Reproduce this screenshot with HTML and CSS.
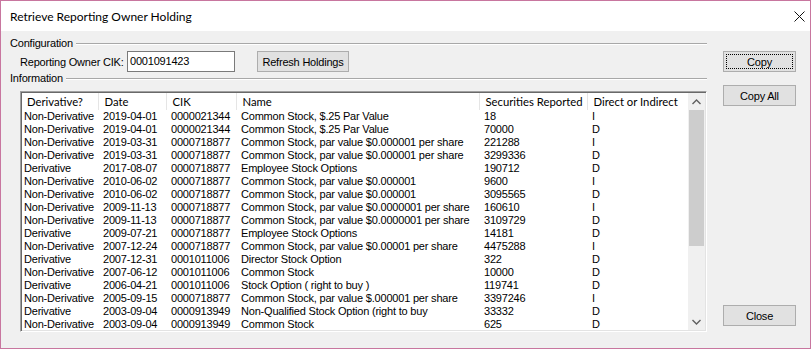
FILE: index.html
```html
<!DOCTYPE html>
<html>
    <head>
        <title>Retrieve Reporting Owner Holding</title>
        <meta charset="utf-8">
        <link rel="stylesheet" href="styles.css">
    </head>
    <body>
        <div class="rroh-window">
            <div class="rroh-titlebar">
                <span class="rroh-titlebar__text">Retrieve Reporting Owner Holding</span>
                <svg class="rroh-titlebar__close" width="11" height="11" viewBox="0 0 11 11">
                    <path d="M0.5 0.5 L10.5 10.5 M10.5 0.5 L0.5 10.5" stroke="#111" stroke-width="1" fill="none"/>
                </svg>
            </div>

            <div class="rroh-content">
                <div class="rroh-main">
                    <div class="rroh-group">
                        <span class="rroh-group__label">Configuration</span>
                        <span class="rroh-group__line"></span>
                    </div>
                    <div class="rroh-cik-row">
                        <label class="rroh-cik-row__label">Reporting Owner CIK:</label>
                        <div class="rroh-input">0001091423</div>
                        <button class="rroh-btn rroh-btn--refresh">Refresh Holdings</button>
                    </div>
                    <div class="rroh-group">
                        <span class="rroh-group__label">Information</span>
                        <span class="rroh-group__line"></span>
                    </div>

                    <div class="rroh-list">
                        <div class="rroh-list__view">
                            <table class="rroh-table">
                                <colgroup>
                                    <col style="width: 76px">
                                    <col style="width: 68px">
                                    <col style="width: 70px">
                                    <col style="width: 243px">
                                    <col style="width: 108px">
                                    <col style="width: 101px">
                                </colgroup>
                                <thead>
                                    <tr>
                                        <th>Derivative?</th>
                                        <th>Date</th>
                                        <th>CIK</th>
                                        <th>Name</th>
                                        <th>Securities Reported</th>
                                        <th class="rroh-table__last">Direct or Indirect</th>
                                    </tr>
                                </thead>
                                <tbody>
                                    <tr><td>Non-Derivative</td><td>2019-04-01</td><td>0000021344</td><td>Common Stock, $.25 Par Value</td><td>18</td><td>I</td></tr>
                                    <tr><td>Non-Derivative</td><td>2019-04-01</td><td>0000021344</td><td>Common Stock, $.25 Par Value</td><td>70000</td><td>D</td></tr>
                                    <tr><td>Non-Derivative</td><td>2019-03-31</td><td>0000718877</td><td>Common Stock, par value $0.000001 per share</td><td>221288</td><td>I</td></tr>
                                    <tr><td>Non-Derivative</td><td>2019-03-31</td><td>0000718877</td><td>Common Stock, par value $0.000001 per share</td><td>3299336</td><td>D</td></tr>
                                    <tr><td>Derivative</td><td>2017-08-07</td><td>0000718877</td><td>Employee Stock Options</td><td>190712</td><td>D</td></tr>
                                    <tr><td>Non-Derivative</td><td>2010-06-02</td><td>0000718877</td><td>Common Stock, par value $0.000001</td><td>9600</td><td>I</td></tr>
                                    <tr><td>Non-Derivative</td><td>2010-06-02</td><td>0000718877</td><td>Common Stock, par value $0.000001</td><td>3095565</td><td>D</td></tr>
                                    <tr><td>Non-Derivative</td><td>2009-11-13</td><td>0000718877</td><td>Common Stock, par value $0.0000001 per share</td><td>160610</td><td>I</td></tr>
                                    <tr><td>Non-Derivative</td><td>2009-11-13</td><td>0000718877</td><td>Common Stock, par value $0.0000001 per share</td><td>3109729</td><td>D</td></tr>
                                    <tr><td>Derivative</td><td>2009-07-21</td><td>0000718877</td><td>Employee Stock Options</td><td>14181</td><td>D</td></tr>
                                    <tr><td>Non-Derivative</td><td>2007-12-24</td><td>0000718877</td><td>Common Stock, par value $0.00001 per share</td><td>4475288</td><td>I</td></tr>
                                    <tr><td>Derivative</td><td>2007-12-31</td><td>0001011006</td><td>Director Stock Option</td><td>322</td><td>D</td></tr>
                                    <tr><td>Non-Derivative</td><td>2007-06-12</td><td>0001011006</td><td>Common Stock</td><td>10000</td><td>D</td></tr>
                                    <tr><td>Derivative</td><td>2006-04-21</td><td>0001011006</td><td>Stock Option ( right to buy )</td><td>119741</td><td>D</td></tr>
                                    <tr><td>Non-Derivative</td><td>2005-09-15</td><td>0000718877</td><td>Common Stock, par value $.000001 per share</td><td>3397246</td><td>I</td></tr>
                                    <tr><td>Derivative</td><td>2003-09-04</td><td>0000913949</td><td>Non-Qualified Stock Option (right to buy</td><td>33332</td><td>D</td></tr>
                                    <tr><td>Non-Derivative</td><td>2003-09-04</td><td>0000913949</td><td>Common Stock</td><td>625</td><td>D</td></tr>
                                </tbody>
                            </table>
                        </div>
                        <div class="rroh-scrollbar">
                            <div class="rroh-scrollbar__arrow">
                                <svg width="9" height="6" viewBox="0 0 9 6"><path d="M0.5 5 L4.5 1 L8.5 5" stroke="#606060" stroke-width="1.4" fill="none"/></svg>
                            </div>
                            <div class="rroh-scrollbar__track">
                                <div class="rroh-scrollbar__thumb"></div>
                            </div>
                            <div class="rroh-scrollbar__arrow">
                                <svg width="9" height="6" viewBox="0 0 9 6"><path d="M0.5 1 L4.5 5 L8.5 1" stroke="#606060" stroke-width="1.4" fill="none"/></svg>
                            </div>
                        </div>
                    </div>
                </div>

                <div class="rroh-side">
                    <button class="rroh-btn rroh-btn--side rroh-btn--focused"><span>Copy</span></button>
                    <button class="rroh-btn rroh-btn--side rroh-btn--copy-all">Copy All</button>
                    <button class="rroh-btn rroh-btn--side rroh-btn--close">Close</button>
                </div>
            </div>
        </div>
    </body>
</html>
```

FILE: styles.css
```css
* {
    box-sizing: border-box;
}

body {
    margin: 0;
    font-family: "Liberation Sans", Arial, sans-serif;
    font-size: 11px;
    letter-spacing: -0.2px;
    color: #000;
    background: #f0f0f0;
}

.rroh-window {
    width: 811px;
    height: 349px;
    border: 1px solid #c8769f;
    background: #f0f0f0;
    display: flex;
    flex-direction: column;
}

.rroh-titlebar {
    height: 30px;
    flex: none;
    background: #fff;
    display: flex;
    align-items: center;
    justify-content: space-between;
    padding: 0 4px 0 9px;
}

.rroh-titlebar__text {
    font-family: Lato, "Noto Sans", sans-serif;
    font-size: 12px;
    letter-spacing: 0;
}

.rroh-titlebar__close {
    margin-right: 1px;
}

.rroh-content {
    flex: 1;
    display: flex;
}

.rroh-main {
    width: 706px;
    padding: 6px 0 0 9px;
}

.rroh-group {
    display: flex;
    align-items: center;
    height: 13px;
    line-height: 13px;
}

.rroh-group__line {
    flex: 1;
    margin-left: 3px;
    margin-top: 1px;
    border-top: 1px solid #a8a8a8;
    border-bottom: 1px solid #fff;
}

.rroh-cik-row {
    display: flex;
    align-items: center;
    height: 21px;
    margin-top: 1px;
    padding-left: 10px;
}

.rroh-cik-row__label {
    flex: none;
    width: 107px;
    white-space: nowrap;
}

.rroh-input {
    width: 108px;
    height: 21px;
    border: 1px solid #7a7a7a;
    background: #fff;
    padding: 3px 0 0 2px;
    line-height: 13px;
}

.rroh-btn {
    font-family: "Liberation Sans", Arial, sans-serif;
    font-size: 11px;
    letter-spacing: -0.2px;
    color: #000;
    background: #e1e1e1;
    border: 1px solid #adadad;
    padding: 0;
    height: 21px;
}

.rroh-btn--refresh {
    width: 92px;
    margin-left: 22px;
}

.rroh-list {
    display: flex;
    width: 687px;
    height: 241px;
    margin: 6px 0 0 10px;
    border: 1px solid;
    border-color: #a0a0a0 #fff #fff #a0a0a0;
    box-shadow: inset 1px 1px 0 #696969, inset -1px -1px 0 #e3e3e3;
    padding: 1px;
    background: #fff;
}

.rroh-list__view {
    flex: 1;
    overflow: hidden;
}

.rroh-table {
    table-layout: fixed;
    border-collapse: collapse;
    width: 666px;
}

.rroh-table th {
    height: 17px;
    padding: 0 0 0 6px;
    font-family: Lato, "Noto Sans", sans-serif;
    font-size: 11.3px;
    letter-spacing: 0;
    font-weight: normal;
    text-align: left;
    white-space: nowrap;
    overflow: hidden;
    border-right: 1px solid #e5e5e5;
}

.rroh-table th:first-child {
    padding-left: 5px;
}

.rroh-table th.rroh-table__last {
    border-right: none;
}

.rroh-table td {
    height: 13px;
    line-height: 13px;
    padding: 0 0 0 5px;
    white-space: nowrap;
    overflow: hidden;
}

.rroh-table td:first-child {
    padding-left: 2px;
}

.rroh-scrollbar {
    width: 17px;
    display: flex;
    flex-direction: column;
    background: #f0f0f0;
}

.rroh-scrollbar__arrow {
    height: 17px;
    display: flex;
    align-items: center;
    justify-content: center;
}

.rroh-scrollbar__track {
    flex: 1;
}

.rroh-scrollbar__thumb {
    height: 136px;
    margin: 0 1px;
    background: #cdcdcd;
}

.rroh-side {
    width: 73px;
    margin-left: 16px;
    display: flex;
    flex-direction: column;
    padding: 20px 0 22px 0;
}

.rroh-btn--side {
    width: 73px;
}

.rroh-btn--focused {
    padding: 2px;
}

.rroh-btn--focused span {
    display: block;
    height: 100%;
    line-height: 13px;
    padding-top: 1px;
    border: 1px dotted #000;
}

.rroh-btn--copy-all {
    margin-top: 13px;
}

.rroh-btn--close {
    margin-top: auto;
}
```
